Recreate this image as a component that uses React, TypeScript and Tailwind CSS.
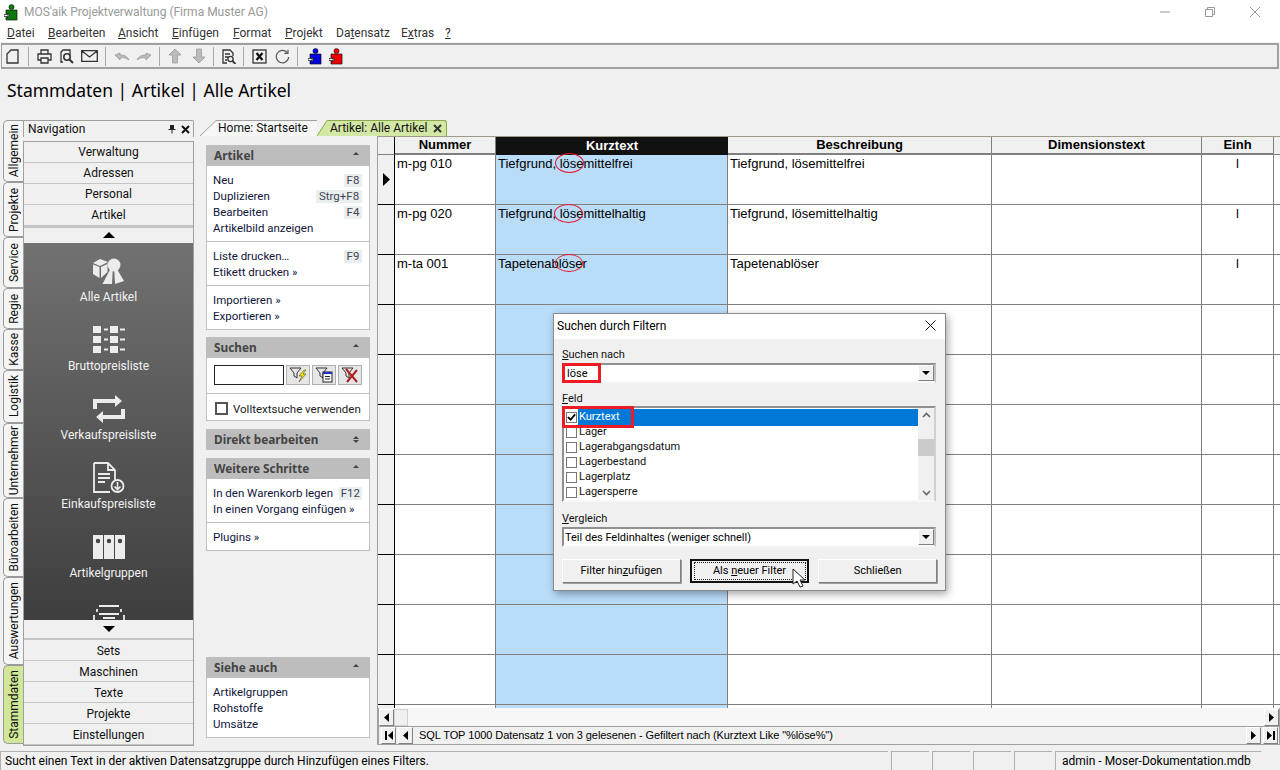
import type { ReactNode } from "react";

const sideTabs = [
  { label: "Allgemein", h: "h-[62px]" },
  { label: "Projekte", h: "h-[55px]" },
  { label: "Service", h: "h-[51px]" },
  { label: "Regie", h: "h-[41px]" },
  { label: "Kasse", h: "h-[41px]" },
  { label: "Logistik", h: "h-[53px]" },
  { label: "Unternehmer", h: "h-[75px]" },
  { label: "Büroarbeiten", h: "h-[79px]" },
  { label: "Auswertungen", h: "h-[88px]" },
];
const rows = [
  { nr: "m-pg 010", kurz: "Tiefgrund, lösemittelfrei", besch: "Tiefgrund, lösemittelfrei", ell: "left-[59px] top-[-2px] h-[20px] w-[29px]" },
  { nr: "m-pg 020", kurz: "Tiefgrund, lösemittelhaltig", besch: "Tiefgrund, lösemittelhaltig", ell: "left-[58px] top-[-1px] h-[19px] w-[29px]" },
  { nr: "m-ta 001", kurz: "Tapetenablöser", besch: "Tapetenablöser", ell: "left-[59px] top-[-1px] h-[18px] w-[28px]" },
  ...Array.from({ length: 9 }, () => ({ nr: "", kurz: "", besch: "", ell: "" })),
];

function Puzzle({ color }: { color: string }) {
  return (
    <svg width="14" height="17" viewBox="0 0 14 17">
      <circle cx="7.5" cy="3" r="2.6" fill={color} stroke="#111" strokeWidth="0.5" />
      <path d="M2 6h11v10H2v-3h3v-3H2z" fill={color} stroke="#111" strokeWidth="0.7" />
      <path d="M0 10.5h4v2H0z" fill="#fff" stroke="#111" strokeWidth="0.7" />
    </svg>
  );
}

function Sep() {
  return <div className="ml-[7px] mr-[8px] h-[19px] w-[1px] bg-[#a8a8a8]" />;
}

function Toolbar() {
  const s = { fill: "none", stroke: "#333", strokeWidth: 1.3 };
  const off = { fill: "#bbb", stroke: "#999", strokeWidth: 0.8 };
  return (
    <div className="mx-[1px] mt-[1px] flex h-[26px] items-center border-y-2 border-r-2 border-l border-[#a0a0a0] bg-[#f0f0f0] pl-[4px]">
      <svg className="mr-[2px]" width="13" height="15" viewBox="0 0 13 15"><path d="M1 5l4-4h7v13H1z" {...s} /></svg>
      <Sep />
      <div className="flex w-[61px] items-center justify-between">
        <svg width="15" height="15" viewBox="0 0 15 15"><path d="M4 5V1h7v4M4 11H1V5h13v6h-3M4 9h7v5H4z" {...s} /></svg>
        <svg width="14" height="15" viewBox="0 0 14 15"><path d="M3 13H1V3l2-2h7v5" {...s} /><circle cx="7" cy="8" r="3.2" {...s} strokeWidth={1.6} /><path d="M9 10l4 4" {...s} strokeWidth={2} /></svg>
        <svg width="17" height="12" viewBox="0 0 17 12"><path d="M.7.7h15.6v10.6H.7zM1 1l7.5 6L16 1" {...s} /></svg>
      </div>
      <Sep />
      <div className="flex w-[38px] items-center justify-between">
        <svg width="16" height="9" viewBox="0 0 16 9"><path d="M1 3l5-2v2c4 0 7 1 9 5-3-2-5-3-9-2v2z" {...off} /></svg>
        <svg width="16" height="9" viewBox="0 0 16 9"><path d="M15 3l-5-2v2C6 3 3 4 1 8c3-2 5-3 9-2v2z" {...off} /></svg>
      </div>
      <Sep />
      <div className="flex w-[38px] items-center justify-between">
        <svg width="14" height="16" viewBox="0 0 14 16"><path d="M7 1l6 6H9.5v8h-5V7H1z" {...off} /></svg>
        <svg width="14" height="16" viewBox="0 0 14 16"><path d="M7 15l6-6H9.5V1h-5v8H1z" {...off} /></svg>
      </div>
      <Sep />
      <svg width="14" height="15" viewBox="0 0 14 15"><path d="M5 14H1V1h7l3 3v3M3 5h5M3 8h3M3 11h2" {...s} /><circle cx="8.5" cy="10" r="2.6" {...s} /><path d="M10.5 12l3 3" {...s} strokeWidth={1.8} /></svg>
      <Sep />
      <div className="flex w-[38px] items-center justify-between">
        <svg width="15" height="15" viewBox="0 0 15 15"><rect x="1" y="1" width="13" height="13" {...s} /><path d="M4.5 4l6 7M10.5 4l-6 7" fill="none" stroke="#111" strokeWidth="2.2" /></svg>
        <svg width="15" height="15" viewBox="0 0 15 15"><path d="M12 3.3A6.2 6.2 0 1 0 13.7 8M13 .8V4.3H9.5" fill="none" stroke="#555" strokeWidth="1.2" /></svg>
      </div>
      <Sep />
      <div className="ml-[2px] flex w-[35px] items-center justify-between">
        <Puzzle color="#0000e0" />
        <Puzzle color="#f00000" />
      </div>
    </div>
  );
}

function SideTab({ label, h, active }: { label: string; h: string; active?: boolean }) {
  return (
    <div className={`flex ${h} w-[20px] items-center justify-center rounded-l-[5px] border-y border-l border-[#9a9a9a] ${active ? "bg-[#cfe796]" : "bg-[#f5f5f5]"}`}>
      <span className="rotate-180 text-[12px] leading-[18px] text-[#111] [writing-mode:vertical-rl]">{label}</span>
    </div>
  );
}

function NavButton({ label }: { label: string }) {
  return <div className="flex h-[21px] items-center justify-center border-b border-[#c4c4c4] bg-[#f0f0f0] pt-[1px] text-[12px] text-[#111]">{label}</div>;
}

function DarkItem({ label, children }: { label: string; children: ReactNode }) {
  return (
    <div className="flex h-[69px] shrink-0 flex-col items-center">
      <div className="flex h-[30px] items-center justify-center">{children}</div>
      <div className="mt-[3px] text-[12px] leading-[16px] text-[#f2f2f2]">{label}</div>
    </div>
  );
}

function Navigation() {
  const f = "#ececec";
  return (
    <div className="flex w-[171px] flex-col">
      <div className="flex h-[17px] items-center justify-between rounded-tr-[2px] border-x border-t border-[#a0a0a0] bg-[#f0f0f0] pl-[4px] pr-[3px] text-[12px] text-[#111]">
        <span>Navigation</span>
        <span className="flex items-center gap-[5px]">
          <svg width="8" height="10" viewBox="0 0 8 10"><path d="M2 1h4v4h1.5v1h-3v3.5h-1V6h-3V5H2z" fill="#222" /></svg>
          <svg width="9" height="9" viewBox="0 0 9 9"><path d="M1 1l7 7M8 1L1 8" stroke="#111" strokeWidth="2" /></svg>
        </span>
      </div>
      <div className="mt-[4px] flex h-[605px] flex-col border border-[#a0a0a0]">
        {["Verwaltung", "Adressen", "Personal", "Artikel"].map((n) => <NavButton key={n} label={n} />)}
        <div className="flex h-[17px] items-center justify-center border-t-2 border-[#c4c4c4] bg-[#f0f0f0]">
          <svg width="12" height="6" viewBox="0 0 12 6"><path d="M6 0l6 6H0z" fill="#000" /></svg>
        </div>
        <div className="flex h-[378px] flex-col overflow-hidden bg-gradient-to-b from-[#727272] to-[#3e3e3e] pt-[13px]">
          <DarkItem label="Alle Artikel">
            <svg width="33" height="28" viewBox="0 0 33 28">
              <circle cx="22" cy="8" r="6.5" fill={f} />
              <path d="M1 6l7-4 8 3-8 4z" fill={f} />
              <path d="M1 7.5l6.5 2.5v11L1 17z" fill={f} />
              <path d="M9 10l6.5-3v8L9 21z" fill={f} />
              <path d="M21 7L10.5 27H20z" fill={f} />
              <path d="M22 7l10 17-9 3z" fill={f} />
            </svg>
          </DarkItem>
          <DarkItem label="Bruttopreisliste">
            <svg width="32" height="28" viewBox="0 0 32 28" fill={f}>
              {[0, 10, 20].map((y) => (
                <g key={y}>
                  <rect x="0" y={y} width="8" height="7" />
                  <rect x="11" y={y + 2.5} width="4" height="2" />
                  <rect x="17" y={y} width="8" height="7" />
                  <rect x="27" y={y + 2.5} width="5" height="2" />
                </g>
              ))}
            </svg>
          </DarkItem>
          <DarkItem label="Verkaufspreisliste">
            <svg width="32" height="28" viewBox="0 0 32 28" fill={f}>
              <path d="M0 4h22V0l7 6-7 6V8H4v6H0z" />
              <path d="M32 24H10v4l-7-6 7-6v4h18v-6h4z" />
            </svg>
          </DarkItem>
          <DarkItem label="Einkaufspreisliste">
            <svg width="32" height="31" viewBox="0 0 32 31">
              <path d="M1 1h14l7 7v10M22 8h-7V1M17 30H1V1" fill="none" stroke={f} strokeWidth="1.8" />
              <path d="M5 12h12M5 16h12M5 20h7" stroke={f} strokeWidth="1.8" />
              <circle cx="24.5" cy="24" r="6" fill="none" stroke={f} strokeWidth="1.8" />
              <path d="M24.5 20v7M21.5 24.5l3 3 3-3" fill="none" stroke={f} strokeWidth="1.6" />
            </svg>
          </DarkItem>
          <DarkItem label="Artikelgruppen">
            <svg width="32" height="24" viewBox="0 0 32 24">
              {[0, 11, 22].map((x) => (
                <g key={x}>
                  <rect x={x} width="10" height="24" fill={f} />
                  <circle cx={x + 5} cy="6" r="2.2" fill="#444" />
                </g>
              ))}
            </svg>
          </DarkItem>
          <DarkItem label="">
            <svg width="32" height="30" viewBox="0 0 32 30" className="mt-[8px]">
              <path d="M6 1h20M4 4v3M28 4v3M6 9h20M10 13h12M1 10v20M31 10v20" stroke={f} strokeWidth="1.8" />
            </svg>
          </DarkItem>
        </div>
        <div className="flex h-[20px] items-center justify-center border-b-2 border-[#c4c4c4] bg-[#f0f0f0]">
          <svg width="12" height="6" viewBox="0 0 12 6"><path d="M6 6l6-6H0z" fill="#000" /></svg>
        </div>
        {["Sets", "Maschinen", "Texte", "Projekte", "Einstellungen"].map((n) => <NavButton key={n} label={n} />)}
      </div>
    </div>
  );
}

function PanelHead({ title, double }: { title: string; double?: boolean }) {
  return (
    <div className="flex h-[21px] items-center justify-between bg-[#bdbdbd] pb-[2px] pl-[8px] pr-[11px] font-['Noto_Sans',sans-serif] text-[11.8px] font-bold text-[#444]">
      <span>{title}</span>
      <svg width="6" height="9" viewBox="0 0 6 9">
        <path d="M3 2l3 3H0z" fill="#444" />
        {double && <path d="M3 9L0 6h6z" fill="#444" />}
      </svg>
    </div>
  );
}

function Link({ label, keyName, wide }: { label: string; keyName?: string; wide?: boolean }) {
  return (
    <div className="flex h-[16px] items-center justify-between whitespace-nowrap text-[#10163c]">
      <span>{label}</span>
      {keyName && <span className={`flex h-[13px] items-center justify-center bg-[#e9eeee] text-[#445] ${wide ? "w-[46px]" : "min-w-[18px] px-[2px]"}`}>{keyName}</span>}
    </div>
  );
}

function Group({ children, last }: { children: ReactNode; last?: boolean }) {
  return <div className={`pl-[6px] pr-[7px] pt-[6px] pb-[5px] ${last ? "" : "border-b border-[#c0c0c0]"}`}>{children}</div>;
}

function FilterBtn({ children }: { children: ReactNode }) {
  return <div className="flex h-[20px] w-[24px] items-center justify-center border border-[#b0b0b0] bg-[#e6e6e6]">{children}</div>;
}

function TaskPane() {
  const funnel = "M1 1h11L8 6v5L5 9V6z";
  return (
    <div className="flex h-full w-[164px] flex-col text-[11.5px] leading-[16px]">
      <PanelHead title="Artikel" />
      <div className="mb-[7px] border-x border-b border-[#c0c0c0] bg-white">
        <Group>
          <Link label="Neu" keyName="F8" />
          <Link label="Duplizieren" keyName="Strg+F8" wide />
          <Link label="Bearbeiten" keyName="F4" />
          <Link label="Artikelbild anzeigen" />
        </Group>
        <Group>
          <Link label="Liste drucken…" keyName="F9" />
          <Link label="Etikett drucken »" />
        </Group>
        <Group last>
          <Link label="Importieren »" />
          <Link label="Exportieren »" />
        </Group>
      </div>
      <PanelHead title="Suchen" />
      <div className="mb-[8px] border-x border-b border-[#c0c0c0] bg-white">
        <div className="flex h-[36px] items-center border-b border-[#c0c0c0] pb-[2px] pl-[7px] pr-[7px]">
          <div className="h-[20px] w-[70px] border border-[#222] bg-white" />
          <div className="ml-[2px] flex gap-[2px]">
            <FilterBtn><svg width="18" height="16" viewBox="0 0 18 16"><path d={funnel} fill="none" stroke="#333" /><path d="M15 3l-5 6h3l-3 6 7-8h-3l3-4z" fill="#f0e000" stroke="#333" strokeWidth="0.5" /></svg></FilterBtn>
            <FilterBtn><svg width="18" height="16" viewBox="0 0 18 16"><path d={funnel} fill="none" stroke="#333" /><rect x="8" y="5" width="9" height="10" fill="#fff" stroke="#222" /><path d="M8 5h9v2H8z" fill="#2030c0" /><path d="M10 9.5h5M10 12h5" stroke="#222" /></svg></FilterBtn>
            <FilterBtn><svg width="18" height="16" viewBox="0 0 18 16"><path d={funnel} fill="none" stroke="#333" /><path d="M5 2l11 13M16 3L6 15" stroke="#b02020" strokeWidth="2" /></svg></FilterBtn>
          </div>
        </div>
        <div className="flex h-[26px] items-center gap-[5px] pl-[8px] pt-[3px] text-[#222]">
          <div className="h-[13px] w-[13px] border-2 border-[#555] bg-white" />
          <span>Volltextsuche verwenden</span>
        </div>
      </div>
      <div className="mb-[8px]"><PanelHead title="Direkt bearbeiten" double /></div>
      <PanelHead title="Weitere Schritte" />
      <div className="border-x border-b border-[#c0c0c0] bg-white">
        <Group>
          <Link label="In den Warenkorb legen" keyName="F12" />
          <Link label="In einen Vorgang einfügen »" />
        </Group>
        <Group last><Link label="Plugins »" /></Group>
      </div>
      <div className="mt-auto">
        <PanelHead title="Siehe auch" />
        <div className="border-x border-b border-[#c0c0c0] bg-white">
          <Group last>
            <Link label="Artikelgruppen" />
            <Link label="Rohstoffe" />
            <Link label="Umsätze" />
          </Group>
        </div>
      </div>
    </div>
  );
}

function GridHead() {
  const cell = "flex h-[18px] items-center justify-center border-r border-b-2 border-[#808080] bg-[#f0f0f0] text-[13px] font-bold text-black";
  return (
    <div className="flex border-t border-[#a09a88]">
      <div className="h-[18px] w-[17px] border-r border-b border-r-black border-b-[#808080] bg-[#f0f0f0]" />
      <div className={`${cell} w-[101px]`}>Nummer</div>
      <div className="flex h-[18px] w-[232px] items-center justify-center bg-[#111] text-[13px] font-bold text-white">Kurztext</div>
      <div className={`${cell} w-[264px]`}>Beschreibung</div>
      <div className={`${cell} w-[210px]`}>Dimensionstext</div>
      <div className={`${cell} w-[72px]`}>Einh</div>
      <div className="h-[18px] flex-1 border-b border-[#808080] bg-[#f0f0f0]" />
    </div>
  );
}

function DataGrid() {
  const cell = "h-[50px] border-r border-b border-[#808080] pt-[1px] text-[13px] leading-[16px] text-black";
  return (
    <div className="h-[572px] overflow-hidden font-['Liberation_Sans',sans-serif]">
      <GridHead />
      {rows.map((r, i) => (
        <div key={i} className="flex">
          <div className="flex h-[50px] w-[17px] items-center justify-center border-r border-b border-black bg-[#f0f0f0]">
            {i === 0 && <svg width="7" height="13" viewBox="0 0 7 13"><path d="M0 0l7 6.5L0 13z" fill="#000" /></svg>}
          </div>
          <div className={`${cell} w-[101px] bg-white pl-[2px]`}>{r.nr}</div>
          <div className={`${cell} relative w-[232px] bg-[#b9dcf9] pl-[2px]`}>
            {r.kurz}
            {r.ell && <div className={`absolute rounded-[50%] border border-[#e8132b] ${r.ell}`} />}
          </div>
          <div className={`${cell} w-[264px] bg-white pl-[2px]`}>{r.besch}</div>
          <div className={`${cell} w-[210px] bg-white`} />
          <div className={`${cell} w-[72px] bg-white text-center`}>{r.nr ? "l" : ""}</div>
          <div className={`${cell} flex-1 border-r-0 bg-white`} />
        </div>
      ))}
    </div>
  );
}

function RaisedBtn({ children, w }: { children: ReactNode; w: string }) {
  return <div className={`flex h-[17px] ${w} items-center justify-center border border-b-[#808080] border-r-[#808080] border-t-white border-l-white bg-[#f0f0f0]`}>{children}</div>;
}

function Tri({ dir }: { dir: "l" | "r" }) {
  return <svg width="5" height="9" viewBox="0 0 5 9"><path d={dir === "l" ? "M5 0L0 4.5 5 9z" : "M0 0l5 4.5L0 9z"} fill="#000" /></svg>;
}

function GridFooter() {
  return (
    <div className="border border-t-0 border-[#a0a0a0] font-['Liberation_Sans',sans-serif]">
      <div className="flex h-[18px] items-center justify-between bg-[#f7f7f7]">
        <div className="flex">
          <RaisedBtn w="w-[15px]"><Tri dir="l" /></RaisedBtn>
          <div className="h-[17px] w-[14px] border border-[#d0d0d0] bg-[#f0f0f0]" />
        </div>
        <RaisedBtn w="w-[15px]"><Tri dir="r" /></RaisedBtn>
      </div>
      <div className="flex h-[18px] items-center border-t border-[#a0a0a0] bg-[#f0f0f0] pl-[2px] pr-[1px]">
        <RaisedBtn w="w-[15px]"><span className="mr-[1px] h-[9px] w-[2px] bg-black" /><Tri dir="l" /></RaisedBtn>
        <div className="ml-[2px]"><RaisedBtn w="w-[15px]"><Tri dir="l" /></RaisedBtn></div>
        <span className="ml-[6px] flex-1 text-[11px] tracking-[-0.07px] text-black">SQL TOP 1000 Datensatz 1 von 3 gelesenen - Gefiltert nach (Kurztext Like "%löse%")</span>
        <RaisedBtn w="w-[15px]"><Tri dir="r" /></RaisedBtn>
        <div className="ml-[2px]"><RaisedBtn w="w-[15px]"><Tri dir="r" /><span className="ml-[1px] h-[9px] w-[2px] bg-black" /></RaisedBtn></div>
      </div>
    </div>
  );
}

function TabStrip() {
  return (
    <div className="flex h-[16px] text-[12px] leading-[15px] text-[#111]">
      <svg width="18" height="16" viewBox="0 0 18 16"><path d="M0 16L16 .5h2V16z" fill="#f6f6f6" /><path d="M0 16L16 .5h2" fill="none" stroke="#a0a0a0" /></svg>
      <div className="flex h-[16px] w-[99px] items-center border-t border-[#a0a0a0] bg-[#f6f6f6]">Home: Startseite</div>
      <svg width="11" height="16" viewBox="0 0 11 16"><path d="M0 16L10 .5h1V16z" fill="#d4e8a6" /><path d="M0 16L10 .5h1" fill="none" stroke="#8aa84a" /></svg>
      <div className="flex h-[16px] w-[119px] items-center justify-between rounded-tr-[3px] border-t border-r border-[#8aa84a] bg-[#d4e8a6] pl-[2px] pr-[4px]">
        <span>Artikel: Alle Artikel</span>
        <svg width="9" height="9" viewBox="0 0 9 9"><path d="M1 1l7 7M8 1L1 8" stroke="#333" strokeWidth="2" /></svg>
      </div>
    </div>
  );
}

function Combo({ value, indent }: { value: string; indent?: boolean }) {
  return (
    <div className="flex h-[20px] w-[374px] items-center justify-between border-y-2 border-l-2 border-r-2 border-t-[#909090] border-l-[#909090] border-b-[#f8f8f8] border-r-[#c0c0c0] bg-white text-[11px] text-black">
      <span className={`pt-[2px] ${indent ? "pl-[3px]" : "pl-[1px]"}`}>{value}</span>
      <div className="flex h-[16px] w-[16px] items-center justify-center border border-r-[#808080] border-b-[#808080] border-t-white border-l-white bg-[#f0f0f0]">
        <svg width="8" height="4" viewBox="0 0 8 4"><path d="M0 0h8L4 4z" fill="#000" /></svg>
      </div>
    </div>
  );
}

function ListRow({ label, on }: { label: string; on?: boolean }) {
  return (
    <div className="flex h-[15px] items-center pl-[2px]">
      <div className="flex h-[11px] w-[11px] items-center justify-center border border-[#777] bg-white">
        {on && <svg width="10" height="9" viewBox="0 0 10 9"><path d="M1 4l3 3 5-6" fill="none" stroke="#000" strokeWidth="2" /></svg>}
      </div>
      <span className={`ml-[1px] flex-1 pl-[1px] text-[11px] ${on ? "bg-[#0078d7] text-white" : "text-[#111]"}`}>{label}</span>
    </div>
  );
}

function DlgBtn({ children, active, w }: { children: ReactNode; active?: boolean; w: string }) {
  return (
    <div className={`flex h-[24px] ${w} items-center justify-center border text-[11px] text-black ${active ? "border-2 border-[#111] bg-[#f0f0f0]" : "border-t-white border-l-white border-r-[#808080] border-b-[#808080] bg-[#f0f0f0] shadow-[1px_1px_0_#a0a0a0]"}`}>
      {active ? <div className="flex h-[18px] w-[112px] items-center justify-center border border-dotted border-[#222]">{children}</div> : children}
    </div>
  );
}

function FilterDialog() {
  const label = "h-[16px] text-[11px] leading-[18px] text-[#111]";
  return (
    <div className="absolute left-[553px] top-[313px] h-[278px] w-[393px] border border-[#8a8a8a] bg-[#f0f0f0] shadow-[2px_3px_8px_rgba(0,0,0,0.35)]">
      <div className="flex h-[25px] items-center justify-between bg-white pb-[2px] pl-[3px] pr-[9px] text-[12px] text-black">
        <span>Suchen durch Filtern</span>
        <svg width="11" height="11" viewBox="0 0 11 11"><path d="M.5.5l10 10M10.5.5l-10 10" stroke="#111" /></svg>
      </div>
      <div className="px-[8px] pt-[8px]">
        <div className="h-[16px] text-[11px] leading-[16px] text-[#111]"><u>S</u>uchen nach</div>
        <Combo value="löse" indent />
        <div className={`mt-[7px] ${label}`}><u>F</u>eld</div>
        <div className="flex h-[96px] w-[374px] border-y-2 border-x-2 border-t-[#909090] border-l-[#909090] border-b-[#f8f8f8] border-r-[#d0d0d0] bg-white">
          <div className="flex-1 pt-[2px]">
            <ListRow label="Kurztext" on />
            <ListRow label="Lager" />
            <ListRow label="Lagerabgangsdatum" />
            <ListRow label="Lagerbestand" />
            <ListRow label="Lagerplatz" />
            <ListRow label="Lagersperre" />
          </div>
          <div className="flex w-[16px] flex-col items-center justify-between bg-[#f0f0f0] py-[4px]">
            <svg width="9" height="6" viewBox="0 0 9 6"><path d="M1 5l3.5-3.5L8 5" fill="none" stroke="#666" strokeWidth="1.6" /></svg>
            <div className="mb-[14px] h-[17px] w-[16px] bg-[#cbcbcb]" />
            <svg width="9" height="6" viewBox="0 0 9 6"><path d="M1 1l3.5 3.5L8 1" fill="none" stroke="#666" strokeWidth="1.6" /></svg>
          </div>
        </div>
        <div className={`mt-[8px] ${label}`}><u>V</u>ergleich</div>
        <div className="mt-[1px]"><Combo value="Teil des Feldinhaltes (weniger schnell)" /></div>
        <div className="mt-[12px] flex gap-[9px]">
          <DlgBtn w="w-[119px]"><span>Filter hin<u>z</u>ufügen</span></DlgBtn>
          <DlgBtn w="w-[120px]" active><span>Als <u>n</u>euer Filter</span></DlgBtn>
          <DlgBtn w="w-[119px]">Schließen</DlgBtn>
        </div>
      </div>
      <div className="absolute left-[8px] top-[49px] h-[20px] w-[39px] border-[3px] border-[#ed1c24]" />
      <div className="absolute left-[8px] top-[92px] h-[22px] w-[72px] border-[3px] border-[#ed1c24]" />
      <svg className="absolute left-[238px] top-[254px]" width="17" height="21" viewBox="0 0 17 21">
        <path d="M1 1v15l4-3 3 6 3-1-3-6h5z" fill="#fff" stroke="#222" />
      </svg>
    </div>
  );
}

function StatusBar() {
  const box = "border-t border-l border-[#b0b0b0]";
  return (
    <div className="flex h-[19px] items-center gap-[3px] whitespace-nowrap bg-[#f0f0f0] text-[12px] text-black">
      <div className={`${box} h-[19px] w-[888px] pl-[4px]`}>Sucht einen Text in der aktiven Datensatzgruppe durch Hinzufügen eines Filters.</div>
      <div className={`${box} h-[19px] w-[38px]`} />
      <div className={`${box} h-[19px] w-[38px]`} />
      <div className={`${box} h-[19px] w-[38px]`} />
      <div className={`${box} h-[19px] w-[38px]`} />
      <div className={`${box} h-[19px] w-[206px] pl-[6px]`}>admin - Moser-Dokumentation.mdb</div>
    </div>
  );
}

const menus = [
  { u: "D", rest: "atei", w: "w-[41px]" },
  { u: "B", rest: "earbeiten", w: "w-[70px]" },
  { u: "A", rest: "nsicht", w: "w-[54px]" },
  { u: "E", rest: "infügen", w: "w-[61px]" },
  { u: "F", rest: "ormat", w: "w-[52px]" },
  { u: "P", rest: "rojekt", w: "w-[51px]" },
];

export default function App() {
  return (
    <div className="relative flex h-[770px] w-[1280px] flex-col overflow-hidden bg-[#f0f0f0] font-['Roboto',sans-serif]">
      <div className="flex h-[24px] items-center justify-between bg-white pl-[4px] pr-[20px]">
        <div className="flex items-center gap-[6px]">
          <Puzzle color="#0a7a0a" />
          <span className="text-[12px] text-[#999]">MOS'aik Projektverwaltung (Firma Muster AG)</span>
        </div>
        <div className="flex items-center gap-[35px]">
          <svg width="10" height="10" viewBox="0 0 10 10"><path d="M0 5h10" stroke="#999" /></svg>
          <svg width="10" height="10" viewBox="0 0 10 10"><path d="M.5 2.5h7v7h-7zM2.5 2.5v-2h7v7h-2" fill="none" stroke="#999" /></svg>
          <svg width="10" height="10" viewBox="0 0 10 10"><path d="M0 0l10 10M10 0L0 10" stroke="#999" /></svg>
        </div>
      </div>
      <div className="flex h-[18px] items-center bg-white pl-[7px] text-[12px] text-[#333]">
        {menus.map((m) => (
          <span key={m.u} className={m.w}><u>{m.u}</u>{m.rest}</span>
        ))}
        <span className="w-[65px]">Da<u>t</u>ensatz</span>
        <span className="w-[44px]">E<u>x</u>tras</span>
        <u>?</u>
      </div>
      <Toolbar />
      <div className="flex h-[51px] items-start pl-[7px] pt-[9px] font-['Noto_Sans',sans-serif] text-[17.5px] leading-[24px] text-black">Stammdaten | Artikel | Alle Artikel</div>
      <div className="flex h-[631px]">
        <div className="ml-[3px] flex w-[20px] flex-col">
          {sideTabs.map((t) => <SideTab key={t.label} label={t.label} h={t.h} />)}
          <SideTab label="Stammdaten" h="h-[79px]" active />
        </div>
        <Navigation />
        <div className="ml-[6px] flex flex-1 flex-col">
          <TabStrip />
          <div className="flex h-[615px]">
            <div className="ml-[6px] h-[602px] w-[165px] pt-[9px]"><TaskPane /></div>
            <div className="ml-[6px] flex h-[609px] flex-1 flex-col border-l border-[#a0a0a0]">
              <DataGrid />
              <GridFooter />
            </div>
          </div>
        </div>
      </div>
      <StatusBar />
      <FilterDialog />
    </div>
  );
}
